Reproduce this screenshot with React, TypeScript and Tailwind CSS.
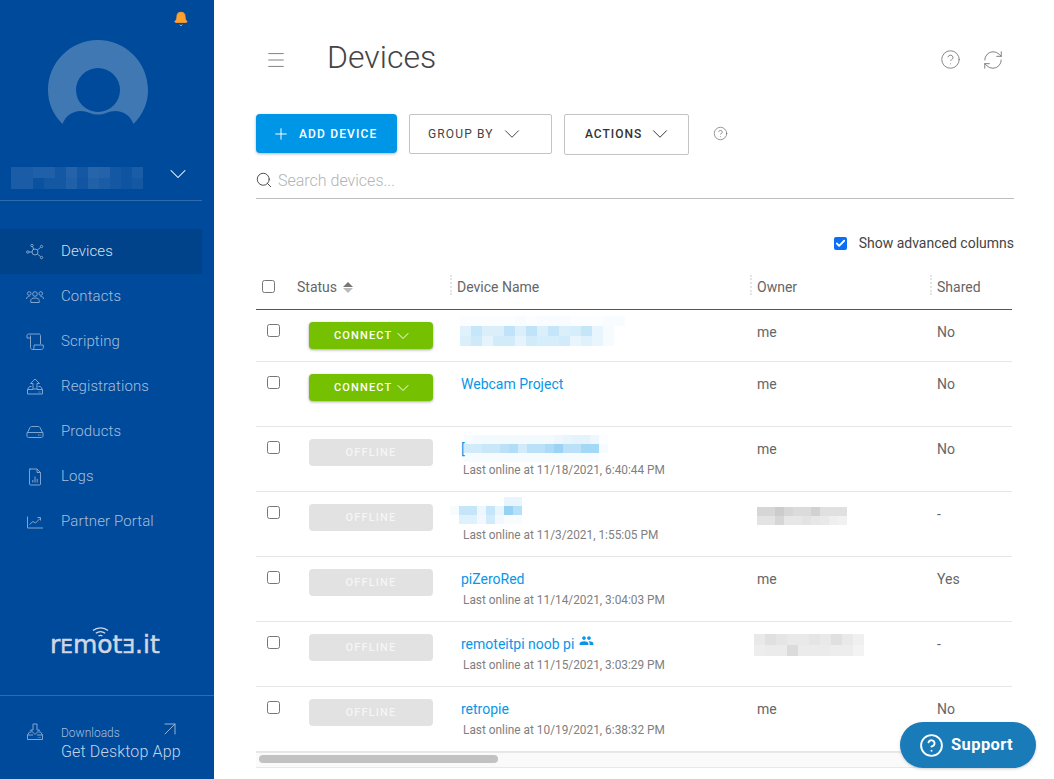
import { Check, ChevronDown, Menu, Plus, Search, CircleHelp, RefreshCw, ArrowUpRight, Bell } from 'lucide-react';
import type { ReactNode } from 'react';

const font = { fontFamily: 'Roboto, sans-serif' };

// pixelated redaction blocks from the screenshot
function Mosaic({ cells, size, tint, className }: { cells: number[][]; size: [number, number]; tint: string; className: string }) {
  return (
    <div className={`absolute flex flex-col ${className}`}>
      {cells.map((row, y) => (
        <div key={y} className="flex">
          {row.map((a, x) => (
            <div key={x} style={{ width: size[0], height: size[1], backgroundColor: tint, opacity: a }} />
          ))}
        </div>
      ))}
    </div>
  );
}

const icon = { fill: 'none', stroke: 'currentColor', strokeWidth: 1 };

const NAV: { label: string; active?: boolean; icon: ReactNode }[] = [
  {
    label: 'Devices',
    active: true,
    icon: (
      <svg width="18" height="18" viewBox="0 0 18 18" {...icon}>
        <circle cx="9" cy="9" r="3" />
        <circle cx="1.800" cy="9" r="1.200" />
        <circle cx="6" cy="2.500" r="1.200" />
        <circle cx="15.500" cy="3.500" r="1.200" />
        <circle cx="15.500" cy="14.500" r="1.200" />
        <path d="M3 9h3M6.600 3.600l1.200 3M14.600 4.300l-3.400 3M14.600 13.700l-3.400-3" />
      </svg>
    ),
  },
  {
    label: 'Contacts',
    icon: (
      <svg width="18" height="18" viewBox="0 0 18 18" {...icon}>
        <circle cx="9" cy="6" r="2.300" />
        <circle cx="3.200" cy="5.500" r="1.800" />
        <circle cx="14.800" cy="5.500" r="1.800" />
        <path d="M4.800 14.500v-2c0-1.600 1.400-2.500 4.200-2.500s4.200.9 4.200 2.500v2zM.5 11c0-1.600 1-2.500 3-2.500M17.500 11c0-1.600-1-2.500-3-2.500" />
      </svg>
    ),
  },
  {
    label: 'Scripting',
    icon: (
      <svg width="18" height="18" viewBox="0 0 18 18" {...icon}>
        <path d="M1 5V2.500C1 1.500 1.700 1 2.500 1H13c1 0 1.500.7 1.500 1.500V11M1 5h3.500M4.500 2.500V14.500c0 1.400 1 2 2 2H15.500c1 0 1.800-.8 1.800-2.200V12H8v2c0 1.500-.8 2.500-1.500 2.500" />
      </svg>
    ),
  },
  {
    label: 'Registrations',
    icon: (
      <svg width="18" height="18" viewBox="0 0 18 18" {...icon}>
        <path d="M9 1L4.500 5.500H7V11h4V5.500h2.500zM5.500 8.500H3.500L1.500 11.500v4.500h15v-4.500L14.500 8.500h-2M1.500 11.500H7M11 11.500h5.500" />
        <path d="M12.500 14h1M14.500 14h.5" />
      </svg>
    ),
  },
  {
    label: 'Products',
    icon: (
      <svg width="18" height="18" viewBox="0 0 18 18" {...icon}>
        <path d="M1.500 9.500L4 4.500c.3-.6.8-1 1.500-1h7c.7 0 1.200.4 1.500 1l2.500 5M1 9.500h16v3.500c0 .8-.6 1.500-1.500 1.500h-13C1.600 14.500 1 13.800 1 13z" />
        <path d="M12 12h1.500M14.500 12h.7" />
      </svg>
    ),
  },
  {
    label: 'Logs',
    icon: (
      <svg width="18" height="18" viewBox="0 0 18 18" {...icon}>
        <path d="M3.500 1h7.500l3.500 3.500V16c0 .6-.4 1-1 1H4.500c-.6 0-1-.4-1-1V2c0-.6.400-1 1-1zM11 1v3.500h3.500" />
        <path d="M6.800 14.500v-2.500M9 14.500V8.500M11.200 14.500v-3.500" />
      </svg>
    ),
  },
  {
    label: 'Partner Portal',
    icon: (
      <svg width="18" height="18" viewBox="0 0 18 18" {...icon}>
        <path d="M1.500 3.500V15h15.500M3.500 11.500l3.500-3 2.500 1.500 4.500-4.500M11.500 4.500h3v3" />
      </svg>
    ),
  },
];

function Logo() {
  return (
    <div className="relative flex h-[52px] items-start pl-[50px]">
      <svg className="absolute left-[92px] top-[16px]" width="17" height="10" viewBox="0 0 17 10" fill="none" stroke="#d0d7e2" strokeWidth="1.300">
        <path d="M1 3.500C5-.1 12-.1 16 3.500M3.800 6.300c2.800-2 6.600-2 9.400 0M6.500 9c1.300-.8 2.700-.8 4 0" />
      </svg>
      <span
        className="mt-[19px] flex items-baseline leading-[30px] text-[#d0d7e2] [-webkit-text-stroke:0.5px_#d0d7e2]"
        style={{ fontFamily: '"DejaVu Sans", sans-serif' }}
      >
        <span className="text-[25px]">r</span>
        <span className="text-[20px]">E</span>
        <span className="text-[25px]">mot</span>
        <span className="text-[20px]">Ǝ</span>
        <span className="text-[25px]">.it</span>
      </span>
    </div>
  );
}

function Sidebar() {
  return (
    <aside className="relative flex h-[779px] w-[214px] shrink-0 flex-col bg-[#004a9c]">
      <Bell className="absolute left-[173px] top-[11px] h-[16px] w-[16px] fill-[#ff9f2e] text-[#ff9f2e]" strokeWidth={1.5} />
      <svg className="ml-[48px] mt-[40px]" width="100" height="85" viewBox="0 0 100 85">
        <path
          fill="#4078b4"
          d="M14.500 84C5 74.500 0 63 0 50 0 22.400 22.400 0 50 0s50 22.400 50 50c0 13-5 24.500-14.500 34-3-8-10-13-18-13-3.500 0-6.500.8-9.500 2-5 2-11 2-16 0-3-1.200-6-2-9.500-2-8 0-15 5-18 13z"
        />
        <circle cx="50" cy="50" r="22" fill="#004a9c" />
      </svg>
      <div className="relative mt-[42px] flex h-[22px] items-center">
        <Mosaic
          className="left-[11px] top-0"
          size={[11, 11]}
          tint="#ffffff"
          cells={[
            [0.1, 0.1, 0.12, 0.12, 0.08, 0.14, 0.08, 0.15, 0.14, 0.08, 0.06, 0.1],
            [0.1, 0.1, 0.04, 0.08, 0.08, 0.12, 0.07, 0.13, 0.1, 0.08, 0.06, 0.08],
          ]}
        />
        <ChevronDown className="absolute left-[164px] top-[-7px] h-[28px] w-[28px] text-white" strokeWidth={0.9} />
      </div>
      <div className="mt-[11px] h-px w-[202px] bg-[#2f6cae]" />
      <nav className="mt-[28px] flex flex-col" style={font}>
        {NAV.map((item) => (
          <div
            key={item.label}
            className={`flex h-[45px] w-[202px] items-center gap-[17px] pl-[26px] text-[15px] font-light tracking-[0.1px] ${
              item.active ? 'bg-[#00438a] text-[#d5e0ee]' : 'text-[#a5bfdc]'
            }`}
          >
            <span className="text-[#80a4cd]">{item.icon}</span>
            {item.label}
          </div>
        ))}
      </nav>
      <div className="mt-auto flex flex-col" style={font}>
        <Logo />
        <div className="mt-[32px] h-px w-full bg-[#2f6cae]" />
        <div className="relative flex h-[83px] gap-[17px] pl-[26px] pt-[30px]">
          <svg className="mt-[-3px] text-[#80a4cd]" width="18" height="18" viewBox="0 0 18 18" {...icon}>
            <path d="M9 11.500L4.500 7H7V1h4v6h2.500zM5.500 9H3.500L1.500 12v4.500h15V12L14.500 9h-2M1.500 12H7M11 12h5.500M12.500 14.500h1M14.500 14.500h.5" />
          </svg>
          <div className="flex flex-col">
            <span className="text-[12px] font-light leading-[14px] text-[#a5bfdc]">Downloads</span>
            <span className="mt-[2px] text-[16px] font-light leading-[20px] tracking-[0.15px] text-[#c4d5e8]">Get Desktop App</span>
          </div>
          <ArrowUpRight className="absolute left-[158px] top-[21px] h-[24px] w-[24px] text-[#a5bfdc]" strokeWidth={0.9} />
        </div>
      </div>
    </aside>
  );
}

function Box({ checked }: { checked?: boolean }) {
  if (checked) {
    return (
      <span className="flex h-[13px] w-[13px] items-center justify-center rounded-[2px] bg-[#0b6ff5]">
        <Check className="h-[11px] w-[11px] text-white" strokeWidth={4} />
      </span>
    );
  }
  return <span className="block h-[13px] w-[13px] rounded-[2.500px] border border-[#767676] bg-white" />;
}

type Device = {
  name?: string;
  online?: boolean;
  last?: string;
  owner?: string;
  shared: string;
  h: string;
  shareIcon?: boolean;
  mosaic?: ReactNode;
  ownerMosaic?: ReactNode;
};

const DEVICES: Device[] = [
  {
    online: true,
    owner: 'me',
    shared: 'No',
    h: 'h-[52px]',
    mosaic: (
      <Mosaic
        className="left-[-1px] top-[6px]"
        size={[11, 10]}
        tint="#1d9be8"
        cells={[
          [0.02, 0.02, 0.02, 0.02, 0.02, 0.03, 0.02, 0.03, 0.03, 0.03, 0.02, 0.02, 0.02, 0.03, 0.03],
          [0.14, 0.25, 0.16, 0.16, 0.28, 0.16, 0.28, 0.16, 0.26, 0.16, 0.18, 0.26, 0.1, 0.04],
          [0.16, 0.22, 0.12, 0.2, 0.2, 0.12, 0.2, 0.18, 0.18, 0.2, 0.1, 0.14, 0.1, 0.04],
        ]}
      />
    ),
  },
  { name: 'Webcam Project', online: true, owner: 'me', shared: 'No', h: 'h-[65px]' },
  {
    name: '[',
    last: 'Last online at 11/18/2021, 6:40:44 PM',
    owner: 'me',
    shared: 'No',
    h: 'h-[65px]',
    mosaic: (
      <Mosaic
        className="left-[3px] top-[8px]"
        size={[9, 9]}
        tint="#1d9be8"
        cells={[
          [0.03, 0.05, 0.05, 0.05, 0.05, 0.05, 0.05, 0.05, 0.05, 0.05, 0.08, 0.1, 0.12, 0.12, 0.08, 0.02],
          [0.2, 0.2, 0.24, 0.24, 0.3, 0.34, 0.2, 0.3, 0.3, 0.36, 0.44, 0.3, 0.3, 0.4, 0.4, 0.04],
          [0.04, 0.04, 0.04, 0.04, 0.04, 0.04, 0.04, 0.04, 0.04, 0.04, 0.04, 0.04, 0.04, 0.04, 0.03, 0],
        ]}
      />
    ),
  },
  {
    last: 'Last online at 11/3/2021, 1:55:05 PM',
    shared: '-',
    h: 'h-[65px]',
    mosaic: (
      <Mosaic
        className="left-[-11px] top-[5px]"
        size={[9, 9]}
        tint="#1d9be8"
        cells={[
          [0, 0, 0, 0, 0, 0, 0.1, 0.1],
          [0.04, 0.26, 0.26, 0.08, 0.26, 0.1, 0.46, 0.32],
          [0, 0.14, 0.14, 0.06, 0.2, 0.06, 0.03, 0.03],
        ]}
      />
    ),
    ownerMosaic: (
      <Mosaic
        className="left-0 top-[15px]"
        size={[9, 9]}
        tint="#999999"
        cells={[
          [0.4, 0.4, 0.5, 0.4, 0.35, 0.35, 0.45, 0.3, 0.3, 0.3],
          [0.28, 0.28, 0.4, 0.24, 0.24, 0.28, 0.24, 0.22, 0.16, 0.14],
        ]}
      />
    ),
  },
  { name: 'piZeroRed', last: 'Last online at 11/14/2021, 3:04:03 PM', owner: 'me', shared: 'Yes', h: 'h-[65px]' },
  {
    name: 'remoteitpi noob pi',
    shareIcon: true,
    last: 'Last online at 11/15/2021, 3:03:29 PM',
    shared: '-',
    h: 'h-[65px]',
    ownerMosaic: (
      <Mosaic
        className="left-[-3px] top-[12px]"
        size={[11, 11]}
        tint="#999999"
        cells={[
          [0.22, 0.3, 0.25, 0.22, 0.22, 0.25, 0.22, 0.3, 0.22, 0.15],
          [0.18, 0.2, 0.2, 0.35, 0.2, 0.2, 0.2, 0.18, 0.18, 0.12],
        ]}
      />
    ),
  },
  { name: 'retropie', last: 'Last online at 10/19/2021, 6:38:32 PM', owner: 'me', shared: 'No', h: 'h-[65px]' },
];

const COLS = 'grid-cols-[53px_152px_296px_180px_1fr]';

function Row({ d }: { d: Device }) {
  return (
    <div className={`grid ${COLS} ${d.h} border-b border-[#e6e6e6] text-[14px] text-[#666666]`}>
      <div className="pl-[11px] pt-[14px]">
        <Box />
      </div>
      <div className="pt-[12px]">
        {d.online ? (
          <div className="flex h-[27px] w-[124px] items-center gap-[1px] rounded-[4px] bg-[#75c000] pl-[25px] pt-[1px] text-[11px] font-medium tracking-[1.15px] text-white shadow-[0_1px_3px_rgba(0,0,0,0.35)]">
            CONNECT
            <ChevronDown className="h-[20px] w-[20px]" strokeWidth={1.2} />
          </div>
        ) : (
          <div className="flex h-[27px] w-[124px] items-center justify-center rounded-[4px] bg-[#e2e2e2] pt-[1px] text-[11px] font-medium tracking-[1.15px] text-[#f5f5f5]">
            OFFLINE
          </div>
        )}
      </div>
      <div className="relative pt-[13px]">
        {d.mosaic}
        <div className="relative flex h-[18px] items-start leading-[18px] text-[#0796e8]">
          {d.name}
          {d.shareIcon && (
            <svg className="ml-[5px] mt-[-2px]" width="15" height="15" viewBox="0 0 24 24" fill="#0796e8">
              <path d="M16 11c1.660 0 2.990-1.340 2.990-3S17.660 5 16 5s-3 1.340-3 3 1.340 3 3 3zm-8 0c1.660 0 2.990-1.340 2.990-3S9.660 5 8 5 5 6.340 5 8s1.340 3 3 3zm0 2c-2.330 0-7 1.170-7 3.500V19h14v-2.500c0-2.330-4.670-3.500-7-3.500zm8 0c-.290 0-.620.020-.970.050 1.160.840 1.970 1.970 1.970 3.450V19h6v-2.500c0-2.330-4.670-3.500-7-3.500z" />
            </svg>
          )}
        </div>
        {d.last && <div className="ml-[2px] mt-[5px] text-[11.850px] leading-[14px] text-[#808080]">{d.last}</div>}
      </div>
      <div className="relative pt-[13px] leading-[18px]">
        {d.owner}
        {d.ownerMosaic}
      </div>
      <div className="pt-[13px] leading-[18px]">{d.shared}</div>
    </div>
  );
}

function HeaderCell({ children }: { children: ReactNode }) {
  return (
    <div className="relative flex items-center">
      <span className="absolute left-[-7px] top-[9px] h-[20px] border-l-2 border-dotted border-[#e4e4e4]" />
      {children}
    </div>
  );
}

function Table() {
  return (
    <div className="w-[756px]">
      <div className={`grid ${COLS} h-[44px] border-b border-[#555555] text-[14px] text-[#666666]`}>
        <div className="pl-[6px] pt-[14px]">
          <Box />
        </div>
        <div className="flex items-center gap-[6px]">
          <span className="ml-[-12px]">Status</span>
          <span className="flex flex-col gap-[1px]">
            <span className="block h-0 w-0 border-x-[5px] border-b-[5px] border-x-transparent border-b-[#777777]" />
            <span className="block h-0 w-0 border-x-[5px] border-t-[5px] border-x-transparent border-t-[#bbbbbb]" />
          </span>
        </div>
        <div className="relative flex items-center">
          <span className="absolute left-[-11px] top-[9px] h-[20px] border-l-2 border-dotted border-[#e4e4e4]" />
          <span className="ml-[-4px]">Device Name</span>
        </div>
        <HeaderCell>Owner</HeaderCell>
        <HeaderCell>Shared</HeaderCell>
      </div>
      {DEVICES.map((d, i) => (
        <Row key={i} d={d} />
      ))}
    </div>
  );
}

export default function App() {
  return (
    <div className="relative flex h-[779px] w-[1054px] overflow-hidden bg-white" style={font}>
      <Sidebar />
      <main className="flex min-w-0 flex-1 flex-col pl-[42px]">
        <header className="flex h-[114px] items-start pr-[50px] pt-[36px]">
          <Menu className="ml-[9px] mt-[13px] h-[22px] w-[22px] text-[#777777]" strokeWidth={1} />
          <h1 className="ml-[40px] text-[32px] font-light leading-[42px] text-[#444444]">Devices</h1>
          <CircleHelp className="ml-auto mt-[13px] h-[21px] w-[21px] text-[#777777]" strokeWidth={1} />
          <RefreshCw className="ml-[21px] mt-[13px] h-[22px] w-[22px] text-[#777777]" strokeWidth={1} />
        </header>
        <div className="flex items-start">
          <button className="flex h-[39px] w-[141px] items-center gap-[9px] rounded-[4px] bg-[#0096e7] pl-[16px] text-[12px] font-medium tracking-[1.15px] text-white shadow-[0_1px_3px_rgba(0,0,0,0.3)]">
            <Plus className="h-[18px] w-[18px]" strokeWidth={1.3} />
            ADD DEVICE
          </button>
          <button className="ml-[12px] flex h-[40px] w-[143px] items-center gap-[5px] rounded-[2px] border border-[#c4c4c4] pl-[18px] text-[12px] tracking-[1.15px] text-[#444444]">
            GROUP BY
            <ChevronDown className="h-[26px] w-[26px]" strokeWidth={0.9} />
          </button>
          <button className="ml-[12px] flex h-[41px] w-[125px] items-center gap-[5px] rounded-[2px] border border-[#c4c4c4] pb-[1px] pl-[20px] text-[12px] font-medium tracking-[1px] text-[#333333]">
            ACTIONS
            <ChevronDown className="h-[26px] w-[26px]" strokeWidth={0.9} />
          </button>
          <CircleHelp className="ml-[24px] mt-[12px] h-[15px] w-[15px] text-[#777777]" strokeWidth={1.2} />
        </div>
        <div className="mt-[13px] flex h-[31px] w-[758px] items-start gap-[5px] border-b border-[#bdbdbd] text-[#b3b3b3]">
          <Search className="ml-[-1px] mt-[3px] h-[18px] w-[18px] text-[#444444]" strokeWidth={1.25} />
          <span className="mt-[4px] text-[16px] font-light leading-[18px]">Search devices...</span>
        </div>
        <div className="mt-[36px] flex w-[758px] items-center justify-end gap-[12px] text-[14px] leading-[16px] text-[#444444]">
          <Box checked />
          Show advanced columns
        </div>
        <div className="mt-[15px] text-[#666666]">
          <Table />
          <div className="h-[16px] w-[756px] border-y border-[#e8e8e8] bg-[#fafafa]">
            <div className="ml-[3px] mt-[2px] h-[8px] w-[239px] rounded-full bg-[#c2c2c2]" />
          </div>
        </div>
      </main>
      <div className="absolute left-[900px] top-[722px] flex h-[46px] w-[136px] items-center gap-[7px] rounded-[23px] bg-[#1a7bb9] pl-[19px] text-[16.500px] font-bold tracking-[0.4px] text-white shadow-[0_1px_3px_rgba(0,0,0,0.2)]">
        <CircleHelp className="h-[25px] w-[25px]" strokeWidth={1.8} />
        Support
      </div>
    </div>
  );
}
